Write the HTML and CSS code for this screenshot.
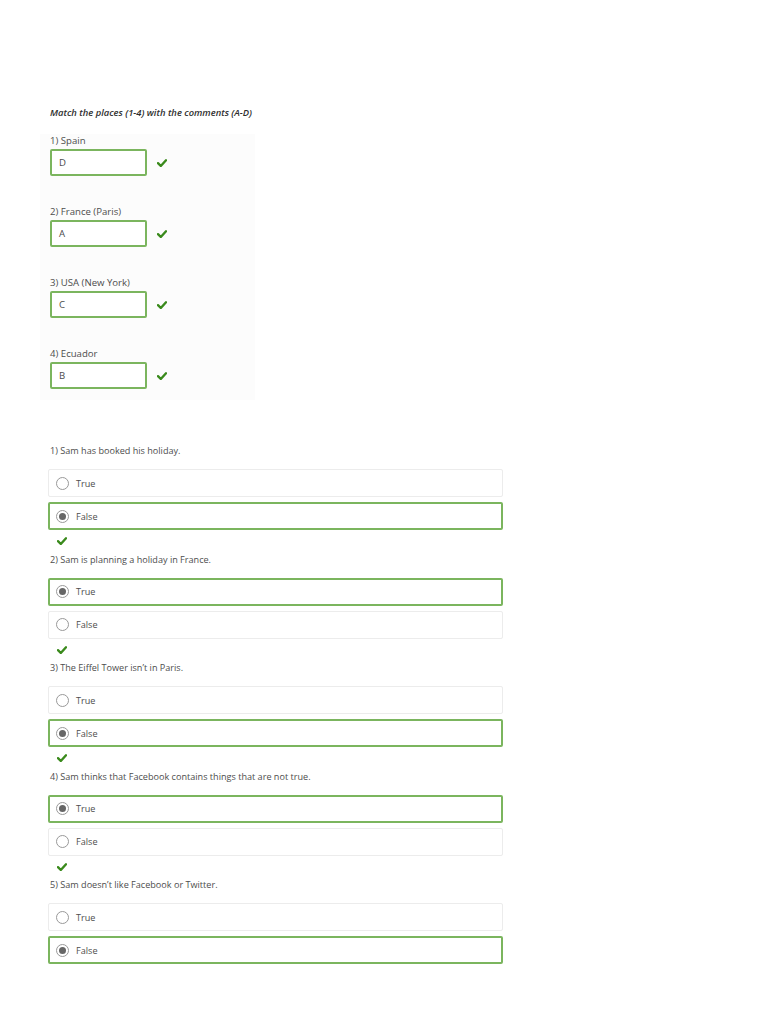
FILE: index.html
```html
<!DOCTYPE html>
<html>
<head>
<meta charset="utf-8">
<link rel="stylesheet" href="styles.css">
</head>
<body>
<div class="page">
  <section class="match">
    <p class="instr">Match the places (1-4) with the comments (A-D)</p>
    <div class="match-list">
      <div class="match-item">
        <div class="label">1) Spain</div>
        <div class="row"><div class="field">D</div><svg class="check" viewBox="0 0 10 8"><path d="M1 4.2 L3.8 7 L9 1.3" /></svg></div>
      </div>
      <div class="match-item">
        <div class="label">2) France (Paris)</div>
        <div class="row"><div class="field">A</div><svg class="check" viewBox="0 0 10 8"><path d="M1 4.2 L3.8 7 L9 1.3" /></svg></div>
      </div>
      <div class="match-item">
        <div class="label">3) USA (New York)</div>
        <div class="row"><div class="field">C</div><svg class="check" viewBox="0 0 10 8"><path d="M1 4.2 L3.8 7 L9 1.3" /></svg></div>
      </div>
      <div class="match-item">
        <div class="label">4) Ecuador</div>
        <div class="row"><div class="field">B</div><svg class="check" viewBox="0 0 10 8"><path d="M1 4.2 L3.8 7 L9 1.3" /></svg></div>
      </div>
    </div>
  </section>

  <section class="tf">
    <div class="q">
      <div class="qtext">1) Sam has booked his holiday.</div>
      <div class="opt"><span class="radio"></span>True</div>
      <div class="opt sel"><span class="radio on"></span>False</div>
      <div class="qcheck"><svg class="check" viewBox="0 0 10 8"><path d="M1 4.2 L3.8 7 L9 1.3" /></svg></div>
    </div>
    <div class="q">
      <div class="qtext">2) Sam is planning a holiday in France.</div>
      <div class="opt sel"><span class="radio on"></span>True</div>
      <div class="opt"><span class="radio"></span>False</div>
      <div class="qcheck"><svg class="check" viewBox="0 0 10 8"><path d="M1 4.2 L3.8 7 L9 1.3" /></svg></div>
    </div>
    <div class="q">
      <div class="qtext">3) The Eiffel Tower isn’t in Paris.</div>
      <div class="opt"><span class="radio"></span>True</div>
      <div class="opt sel"><span class="radio on"></span>False</div>
      <div class="qcheck"><svg class="check" viewBox="0 0 10 8"><path d="M1 4.2 L3.8 7 L9 1.3" /></svg></div>
    </div>
    <div class="q">
      <div class="qtext">4) Sam thinks that Facebook contains things that are not true.</div>
      <div class="opt sel"><span class="radio on"></span>True</div>
      <div class="opt"><span class="radio"></span>False</div>
      <div class="qcheck"><svg class="check" viewBox="0 0 10 8"><path d="M1 4.2 L3.8 7 L9 1.3" /></svg></div>
    </div>
    <div class="q">
      <div class="qtext">5) Sam doesn’t like Facebook or Twitter.</div>
      <div class="opt"><span class="radio"></span>True</div>
      <div class="opt sel"><span class="radio on"></span>False</div>
    </div>
  </section>
</div>
</body>
</html>
```

FILE: styles.css
```css
html, body {
  margin: 0;
  padding: 0;
  background: #ffffff;
}
body {
  font-family: "Open Sans", "Liberation Sans", sans-serif;
  color: #4d4d4d;
  font-size: 9.1px;
}
.page {
  padding: 106px 0 0 0;
}
.match {
  width: 215px;
  margin-left: 40px;
  padding-left: 10px;
  box-sizing: border-box;
}
.instr {
  margin: 0;
  font-style: italic;
  font-weight: 600;
  color: #2e2e2e;
  line-height: 14px;
  font-size: 9.4px;
}
.match-list {
  background: #fcfcfc;
  margin: 14px 0 0 -10px;
  padding: 0 0 11px 10px;
  display: flex;
  flex-direction: column;
  gap: 29px;
}
.label {
  line-height: 14px;
  font-size: 9.6px;
}
.row {
  margin-top: 1px;
  display: flex;
  align-items: center;
  gap: 10px;
}
.field {
  width: 97px;
  height: 27px;
  box-sizing: border-box;
  border: 2px solid #7bb55e;
  border-radius: 2px;
  background: #fff;
  padding-left: 7px;
  line-height: 23px;
  font-size: 9.6px;
}
.check {
  width: 10px;
  height: 8px;
  fill: none;
  stroke: #3a8a1c;
  stroke-width: 2.4;
  stroke-linecap: round;
  stroke-linejoin: round;
}
.tf {
  margin: 44px 0 0 48px;
  width: 455px;
}
.q {
  display: flex;
  flex-direction: column;
}
.qtext {
  line-height: 14px;
  padding-left: 2px;
  margin-bottom: 11px;
}
.opt {
  height: 28px;
  box-sizing: border-box;
  border: 1px solid #ececec;
  border-radius: 2px;
  display: flex;
  align-items: center;
  gap: 7px;
  padding-left: 7px;
}
.opt + .opt {
  margin-top: 5px;
}
.opt.sel {
  border: 2px solid #7bb55e;
  padding-left: 6px;
}
.radio {
  width: 13px;
  height: 13px;
  box-sizing: border-box;
  border: 1px solid #999;
  border-radius: 50%;
  background: #fff;
  display: flex;
  align-items: center;
  justify-content: center;
}
.radio.on::after {
  content: "";
  width: 7px;
  height: 7px;
  border-radius: 50%;
  background: #666;
}
.qcheck {
  height: 22.6px;
  display: flex;
  align-items: center;
  padding-left: 9px;
}
```
